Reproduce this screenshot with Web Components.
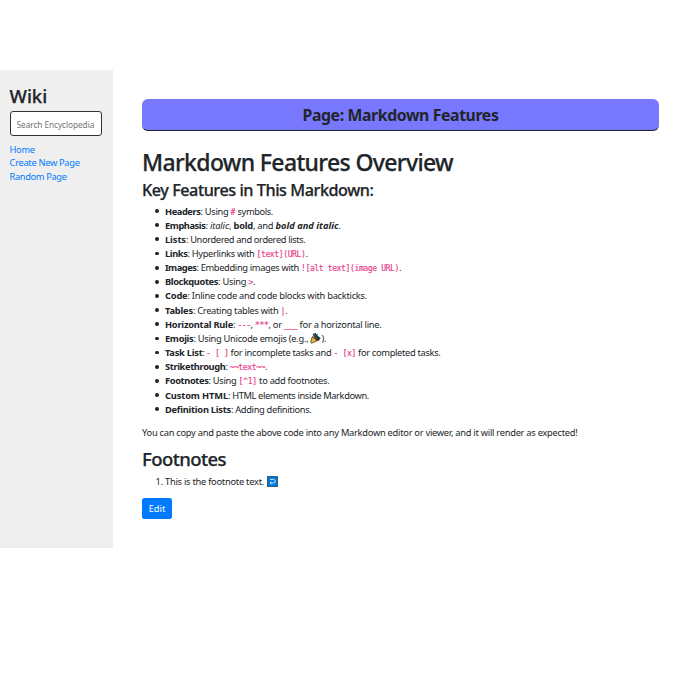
<!DOCTYPE html>
<html lang="en">
<head>
<meta charset="utf-8">
<title>Markdown Features</title>
<style>
body{margin:0;background:#fff;color:#212529;font:9.3px/14.17px "Noto Sans","Open Sans",sans-serif}
</style>
</head>
<body>
<wiki-page></wiki-page>
<script>
const define = (name, html, ready) => {
  const template = document.createElement('template');
  template.innerHTML = html;
  customElements.define(name, class extends HTMLElement {
    constructor() {
      super();
      this.attachShadow({mode: 'open'}).append(template.content.cloneNode(true));
    }
    connectedCallback() { if (ready) ready(this); }
  });
};

// A run of text set to a given advance width by adjusting its tracking.
define('fit-text', `<style>
:host{display:inline-block;white-space:pre;vertical-align:baseline}
:host([kind=b]),:host([kind=bi]){font-weight:700}
:host([kind=i]),:host([kind=bi]){font-style:italic}
:host([kind=code]){font-family:"DejaVu Sans Mono","Liberation Mono",monospace;font-size:8.1px;color:#e83e8c;-webkit-text-stroke:.15px #e83e8c}
</style><slot></slot>`, el => {
  const target = parseFloat(el.getAttribute('w'));
  const natural = el.getBoundingClientRect().width;
  el.style.letterSpacing = (target - natural) / [...el.textContent].length + 'px';
  el.style.width = target + 'px';
});

define('wiki-heading', `<style>
:host{display:block;font-weight:500;white-space:nowrap;-webkit-text-stroke:.25px #212529}
:host([level="1"]){font-size:23px;line-height:28px}
:host([level="2"]){font-size:18.5px;line-height:23px}
:host([level="3"]){font-size:16.2px;line-height:20px}
</style><slot></slot>`);

define('wiki-banner', `<style>
:host{display:block;box-sizing:border-box;height:32px;border-radius:6px;background:#7878ff;border-bottom:1.4px solid #212529;text-align:center;font-size:15.8px;line-height:33px;font-weight:700}
</style><slot></slot>`);

define('wiki-search', `<style>
:host{display:block}
input{display:block;box-sizing:border-box;width:92px;height:25px;border:1px solid #333;border-radius:3px;background:#fff;padding:1px 6px 0;font:8.3px "Noto Sans",sans-serif;letter-spacing:-.08px;outline:0}
input::placeholder{color:#757575;opacity:1}
</style><input type="text" placeholder="Search Encyclopedia">`);

define('wiki-link', `<style>
:host{display:block;height:13.9px}
a{color:#007bff;text-decoration:none}
</style><a href="#"><slot></slot></a>`);

define('wiki-sidebar', `<style>
:host{display:block;box-sizing:border-box;width:113.4px;height:478px;background:#efefef;padding:14px 10px 0 9.6px}
wiki-search{margin:4px 0 6.6px}
</style>
<wiki-heading level="2"><fit-text w="37.5">Wiki</fit-text></wiki-heading>
<wiki-search></wiki-search>
<wiki-link><fit-text w="25">Home</fit-text></wiki-link>
<wiki-link><fit-text w="70">Create New Page</fit-text></wiki-link>
<wiki-link><fit-text w="57">Random Page</fit-text></wiki-link>`);

define('wiki-item', `<style>
:host{display:flex;height:14.17px;white-space:nowrap;align-items:baseline}
i{flex:none;width:3.8px;height:3.8px;border-radius:50%;background:#212529;margin:0 5.8px 0 13.4px;position:relative;top:-1.6px}
b{flex:none;width:23px;box-sizing:border-box;padding-left:13.5px;font-weight:400}
:host([n]) i,:host(:not([n])) b{display:none}
</style><i></i><b>1.</b><span><slot></slot></span>`);

define('party-icon', `<style>
:host{display:inline-block;width:11px;height:11px;vertical-align:-2px}svg{display:block}
</style><svg width="11" height="11" viewBox="0 0 11 11">
<path d="M2.6 1l3-1 2.3 3 2.7 2-2 3-3-.5z" fill="#183341"/>
<path d="M2.4 3.6l4.8 4.2-5.6 2.4-.9-.8z" fill="#eab73e" stroke="#24221d" stroke-width=".7"/>
<path d="M3.4 3q2 .2 3.1 1.7T8 8Q5 8 3.4 3z" fill="#6e421c"/>
<path d="M4 1l1.2 1.2M8.7 4l1.6.8M7 2l1-1" stroke="#238daf" stroke-width=".9"/>
<path d="M8 7.4l1.4.5M5.8 2.6l.6 1" stroke="#d65243" stroke-width=".8"/></svg>`);

define('return-icon', `<style>
:host{display:inline-block;width:11px;height:11px;vertical-align:-2px;margin-left:3px}svg{display:block}
</style><svg width="11" height="11" viewBox="0 0 11 11">
<path d="M.4.4h10.2v10.2H.4z" fill="#0078d7" stroke="#173b5b" stroke-width=".8"/>
<path d="M3 3.4h3.5a1.8 1.8 0 0 1 0 3.6H3.2M4.5 5.8L3 7l1.5 1.2" fill="none" stroke="#d8efff" stroke-width=".9"/></svg>`);

define('wiki-button', `<style>
:host{display:block}
button{display:block;width:30px;height:21.5px;padding:1px 0 0;border:0;border-radius:2.5px;background:#007bff;color:#fff;font:inherit}
</style><button><slot></slot></button>`);

const items = [
  [['b',35.5,'Headers'],['',30,': Using '],['code',5,'#'],['',37.5,' symbols.']],
  [['b',40.5,'Emphasis'],['',4.5,': '],['i',19,'italic'],['',4.5,', '],['b',19.5,'bold'],['',22.5,', and '],['bi',63,'bold and italic'],['',2.5,'.']],
  [['b',21,'Lists'],['',119.5,': Unordered and ordered lists.']],
  [['b',22.5,'Links'],['',69,': Hyperlinks with '],['code',49,'[text](URL)'],['',2.5,'.']],
  [['b',31.5,'Images'],['',104.5,': Embedding images with '],['code',98,'![alt text](image URL)'],['',2.5,'.']],
  [['b',53,'Blockquotes'],['',30.5,': Using '],['code',4.5,'>'],['',2.5,'.']],
  [['b',22.5,'Code'],['',179.5,': Inline code and code blocks with backticks.']],
  [['b',28,'Tables'],['',87.5,': Creating tables with '],['code',4.5,'|'],['',2.5,'.']],
  [['b',68,'Horizontal Rule'],['',4.5,': '],['code',13,'---'],['',4.5,', '],['code',13.5,'***'],['',15.5,', or '],['code',13.5,'___'],['',84,' for a horizontal line.']],
  [['b',28.5,'Emojis'],['',117,': Using Unicode emojis (e.g., '],['icon'],['',5,').']],
  [['b',37.5,'Task List'],['',3.5,': '],['code',22.5,'- [ ]'],['',105,' for incomplete tasks and '],['code',22.5,'- [x]'],['',84.5,' for completed tasks.']],
  [['b',60.5,'Strikethrough'],['',4,': '],['code',35.5,'~~text~~'],['',2.5,'.']],
  [['b',43.5,'Footnotes'],['',30,': Using '],['code',18.5,'[^1]'],['',72.5,' to add footnotes.']],
  [['b',63,'Custom HTML'],['',141,': HTML elements inside Markdown.']],
  [['b',66,'Definition Lists'],['',80.5,': Adding definitions.']]
];
const escapeHtml = text => text.replace(/&/g, '&amp;').replace(/</g, '&lt;').replace(/>/g, '&gt;');
const list = items.map(item => '<wiki-item>' + item.map(([kind, w, text]) =>
  kind === 'icon' ? '<party-icon></party-icon>' : `<fit-text kind="${kind}" w="${w}">${escapeHtml(text)}</fit-text>`
).join('') + '</wiki-item>').join('');

define('wiki-article', `<style>
:host{display:block;width:517px;padding-top:29px}
.title{margin-top:17px}
.sub{margin-top:3.5px}
.list{margin-top:5px}
.note{margin:9.3px 0 7px}
.foot{margin-top:5px}
wiki-button{margin-top:8.2px}
</style>
<wiki-banner><fit-text w="196">Page: Markdown Features</fit-text></wiki-banner>
<wiki-heading class="title" level="1"><fit-text w="311">Markdown Features Overview</fit-text></wiki-heading>
<wiki-heading class="sub" level="3"><fit-text w="231.5">Key Features in This Markdown:</fit-text></wiki-heading>
<div class="list">${list}</div>
<div class="note"><fit-text w="435.5">You can copy and paste the above code into any Markdown editor or viewer, and it will render as expected!</fit-text></div>
<wiki-heading level="2"><fit-text w="84">Footnotes</fit-text></wiki-heading>
<div class="foot"><wiki-item n="1"><fit-text w="99">This is the footnote text.</fit-text><return-icon></return-icon></wiki-item></div>
<wiki-button>Edit</wiki-button>`);

define('wiki-page', `<style>
:host{display:flex;gap:28.6px;height:700px;box-sizing:border-box;padding-top:70px;overflow:hidden}
</style><wiki-sidebar></wiki-sidebar><wiki-article></wiki-article>`);
</script>
</body>
</html>
